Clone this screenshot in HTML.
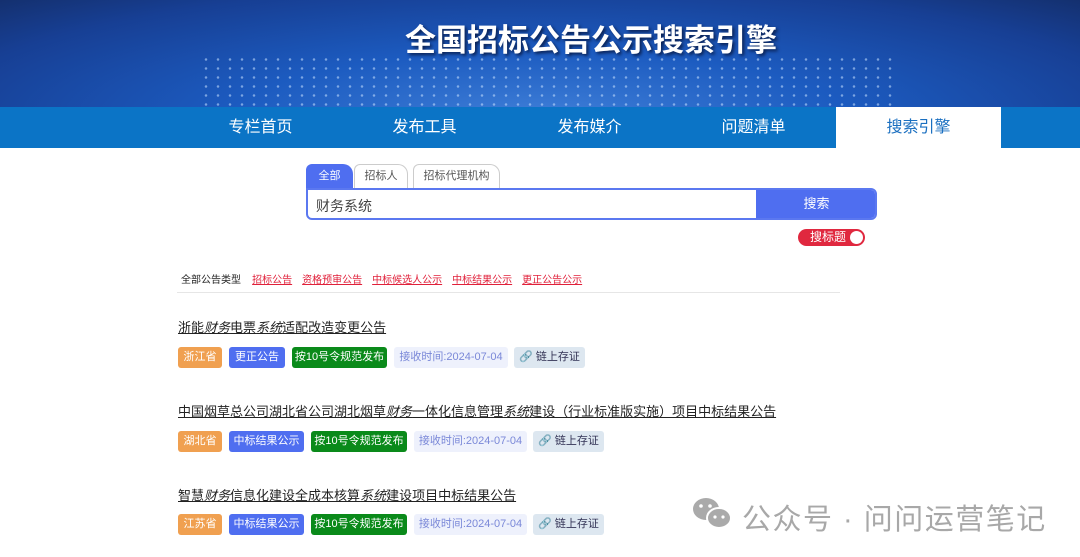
<!DOCTYPE html>
<html><head><meta charset="utf-8"><style>
*{margin:0;padding:0;box-sizing:border-box}
body{width:1080px;height:557px;overflow:hidden;background:#fff;font-family:"Liberation Sans","Noto Sans CJK SC",sans-serif;position:relative}
.ab{position:absolute}
#ban{left:0;top:0;width:1080px;height:107px;background:radial-gradient(ellipse at 50% 110%,#3f7fd8 0%,#1c5bc0 40%,#173f94 80%,#14306f 100%)}
#dots{left:200px;top:55px;width:700px;height:52px;background-image:radial-gradient(circle,rgba(200,225,255,.8) 1px,transparent 1.5px);background-size:12px 9px;opacity:.7}
#title{left:405px;top:15px;color:#fff;font-size:31px;font-weight:bold;text-shadow:2px 2px 3px #0a2050;white-space:nowrap}
#nav{left:0;top:107px;width:1080px;height:41px;background:#0b74c6}
.ni{position:absolute;top:0;height:41px;line-height:41px;color:#fff;font-size:16px;text-align:center;width:165px}
.tab{position:absolute;top:164px;height:24px;line-height:22px;font-size:11px;text-align:center;border:1px solid #ccc;border-bottom:none;border-radius:6px 10px 0 0;color:#555;background:#fff}
.tg{position:absolute;height:21px;line-height:21px;font-size:11px;color:#fff;text-align:center;border-radius:3px}
.t{position:absolute;left:178px;font-size:13px;color:#222;text-decoration:underline;white-space:nowrap}
.t i{font-style:italic}
.f{color:#e0203a;text-decoration:underline;margin-right:10px}
</style></head><body>
<div id="ban" class="ab"></div>
<div id="dots" class="ab"></div>
<div id="title" class="ab">全国招标公告公示搜索引擎</div>
<div id="nav" class="ab">
<div class="ni" style="left:178px">专栏首页</div>
<div class="ni" style="left:342px">发布工具</div>
<div class="ni" style="left:507px">发布媒介</div>
<div class="ni" style="left:671px">问题清单</div>
<div class="ni" style="left:836px;background:#fff;color:#1a6fc0">搜索引擎</div>
</div>
<div class="tab" style="left:306px;width:47px;background:#4f6ef0;color:#fff;border-color:#4f6ef0">全部</div>
<div class="tab" style="left:354px;width:54px">招标人</div>
<div class="tab" style="left:413px;width:87px">招标代理机构</div>
<div class="ab" style="left:306px;top:188px;width:571px;height:32px;border:2px solid #5b78f0;border-radius:0 6px 6px 6px;overflow:hidden">
<div class="ab" style="left:8px;top:6px;font-size:14px;color:#444">财务系统</div>
<div class="ab" style="left:448px;top:0;width:121px;height:28px;background:#4f6ef0;color:#fff;font-size:13px;text-align:center;line-height:28px">搜索</div>
</div>
<div class="ab" style="left:798px;top:229px;width:67px;height:17px;border-radius:9px;background:#e0283f;color:#fff;font-size:12px;line-height:17px;padding-left:12px">搜标题<span class="ab" style="right:2px;top:2px;width:13px;height:13px;border-radius:50%;background:#fff"></span></div>
<div class="ab" style="left:181px;top:271px;font-size:10px;color:#222;white-space:nowrap">全部公告类型&nbsp;&nbsp;&nbsp;&nbsp;<span class="f">招标公告</span><span class="f">资格预审公告</span><span class="f">中标候选人公示</span><span class="f">中标结果公示</span><span class="f">更正公告公示</span></div>
<div class="ab" style="left:177px;top:292px;width:663px;height:1px;background:#e6e6e6"></div>

<div class="t" style="top:317px">浙能<i>财务</i>电票<i>系统</i>适配改造变更公告</div>
<div class="tg" style="left:178px;top:347px;width:44px;background:#f0a050">浙江省</div>
<div class="tg" style="left:229px;top:347px;width:56px;background:#4f6ef0">更正公告</div>
<div class="tg" style="left:292px;top:347px;width:95px;background:#0a8a1a">按10号令规范发布</div>
<div class="tg" style="left:394px;top:347px;width:114px;background:#eef1fc;color:#7a88d8">接收时间:2024-07-04</div>
<div class="tg" style="left:514px;top:347px;width:71px;background:#dde7f0;color:#335">🔗 链上存证</div>

<div class="t" style="top:401px">中国烟草总公司湖北省公司湖北烟草<i>财务</i>一体化信息管理<i>系统</i>建设（行业标准版实施）项目中标结果公告</div>
<div class="tg" style="left:178px;top:431px;width:44px;background:#f0a050">湖北省</div>
<div class="tg" style="left:229px;top:431px;width:75px;background:#4f6ef0">中标结果公示</div>
<div class="tg" style="left:311px;top:431px;width:96px;background:#0a8a1a">按10号令规范发布</div>
<div class="tg" style="left:414px;top:431px;width:113px;background:#eef1fc;color:#7a88d8">接收时间:2024-07-04</div>
<div class="tg" style="left:533px;top:431px;width:71px;background:#dde7f0;color:#335">🔗 链上存证</div>

<div class="t" style="top:485px">智慧<i>财务</i>信息化建设全成本核算<i>系统</i>建设项目中标结果公告</div>
<div class="tg" style="left:178px;top:514px;width:44px;background:#f0a050">江苏省</div>
<div class="tg" style="left:229px;top:514px;width:75px;background:#4f6ef0">中标结果公示</div>
<div class="tg" style="left:311px;top:514px;width:96px;background:#0a8a1a">按10号令规范发布</div>
<div class="tg" style="left:414px;top:514px;width:113px;background:#eef1fc;color:#7a88d8">接收时间:2024-07-04</div>
<div class="tg" style="left:533px;top:514px;width:71px;background:#dde7f0;color:#335">🔗 链上存证</div>

<svg class="ab" style="left:692px;top:497px" width="42" height="34" viewBox="0 0 42 34"><ellipse cx="14" cy="12" rx="13" ry="11" fill="#aaa"/><ellipse cx="27" cy="21" rx="12" ry="10" fill="#aaa" stroke="#fff" stroke-width="2"/><circle cx="9" cy="9" r="1.8" fill="#fff"/><circle cx="18" cy="9" r="1.8" fill="#fff"/><circle cx="23" cy="20" r="1.6" fill="#fff"/><circle cx="31" cy="20" r="1.6" fill="#fff"/></svg>
<div class="ab" style="left:742px;top:496px;font-size:29px;color:#a8a8a8;white-space:nowrap;letter-spacing:1.5px">公众号 · 问问运营笔记</div>
</body></html>
